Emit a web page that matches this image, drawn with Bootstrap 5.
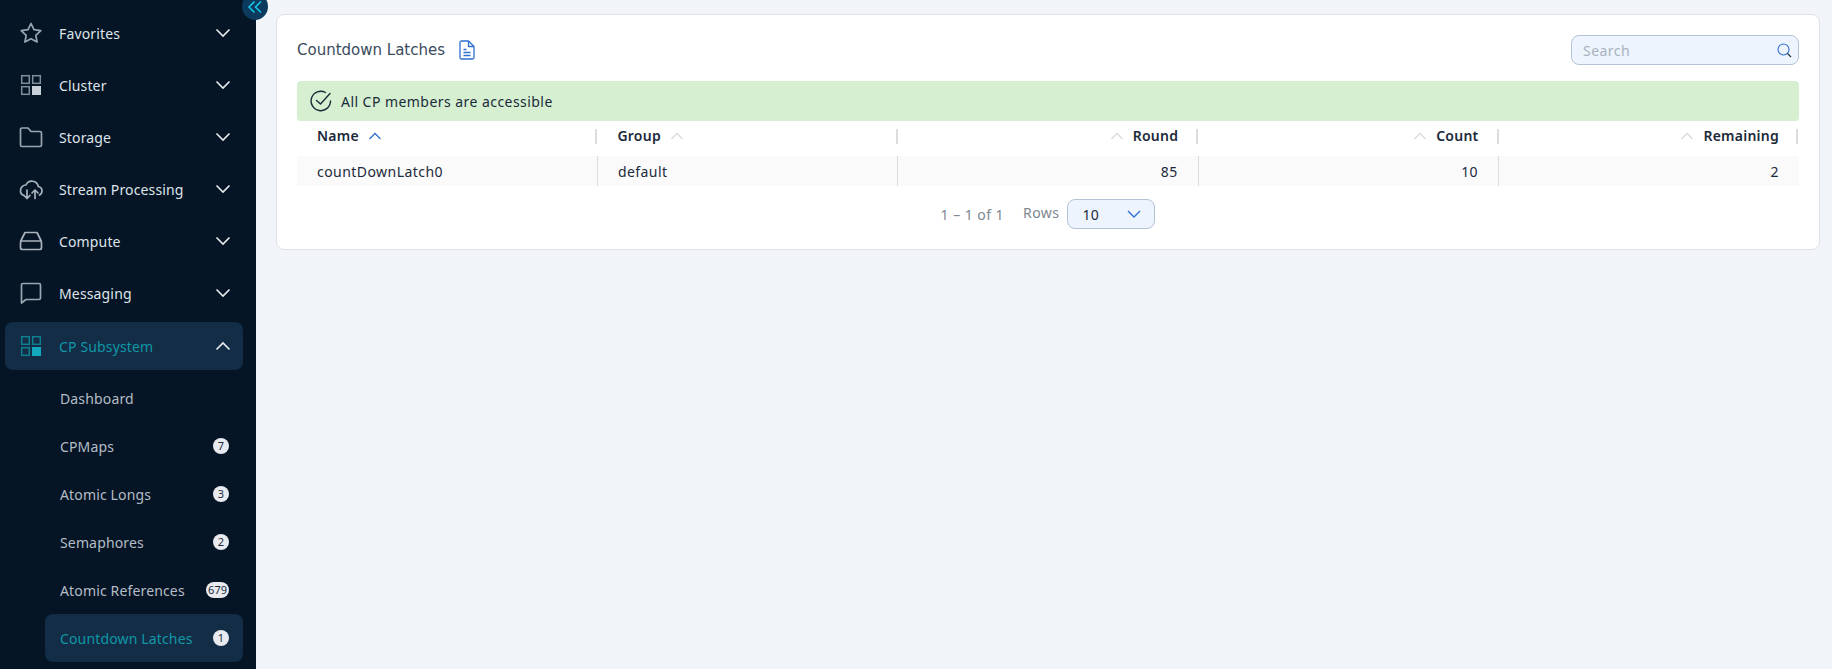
<!DOCTYPE html>
<html lang="en">
<head>
    <meta charset="UTF-8">
    <meta name="viewport" content="width=device-width, initial-scale=1.0">
    <title>Countdown Latches</title>
    <link href="https://cdn.jsdelivr.net/npm/bootstrap@5.3.0/dist/css/bootstrap.min.css" rel="stylesheet">
    <style>
        html, body { height: 100%; }
        body { background-color: #f1f4f9; font-family: "Noto Sans", sans-serif; font-size: 14px; color: #1b2a3a; overflow: hidden; }
        .app-shell { height: 669px; }
        .side-bar { width: 256px; flex: none; background-color: #051525; position: relative; padding-top: 7px; letter-spacing: .15px; }
        .collapse-btn { position: absolute; top: -7px; left: 242px; width: 26px; height: 27px; border-radius: 50%; background-color: #0b3a5c; z-index: 2; }
        .menu-row { height: 52px; padding: 0 24px 0 20px; color: #dfe4ea; }
        .menu-row.is-open { height: 48px; margin: 3px 13px 4px 5px; padding: 0 11px 0 15px; background-color: #142d46; border-radius: 8px; color: #0f97a8; }
        .menu-icon { width: 24px; height: 24px; flex: none; margin-right: 16px; margin-left: -1px; }
        .menu-chev { width: 16px; height: 16px; margin-left: auto; flex: none; margin-right: 1px; }
        .sub-row { height: 48px; margin-left: 45px; margin-right: 13px; padding: 0 14px 0 15px; color: #b5bdc6; }
        .sub-row.is-current { background-color: #142d46; border-radius: 8px; color: #0f97a8; }
        .count-pill { margin-left: auto; min-width: 16px; height: 16px; padding: 0 2px; border-radius: 8px; background-color: #e8eaf0; color: #1b2a3a; font-size: 11px; line-height: 16px; text-align: center; letter-spacing: 0; }
        .main-pane { padding: 14px 12px 0 20px; letter-spacing: .45px; }
        .panel-box { height: 236px; border: 1px solid #dfe2e7; border-radius: 8px; background-color: #fff; padding: 19px 20px 0; }
        .panel-head { height: 32px; margin-bottom: 15px; }
        .panel-title { font-family: "DejaVu Sans", sans-serif; font-size: 15px; font-weight: 400; letter-spacing: 0; color: #3a4b5d; margin: 0; }
        .doc-icon { width: 18px; height: 20px; margin-left: 13px; }
        .search-box { width: 228px; height: 30px; border: 1px solid #b4c2d6; border-radius: 8px; background-color: #edf4fd; padding: 0 6px 0 11px; }
        .search-box input { border: 0; background: transparent; outline: 0; padding: 0; width: 190px; font-size: 14px; color: #1b2a3a; letter-spacing: .45px; }
        .search-box input::placeholder { color: #a9b2bf; }
        .ok-bar { height: 40px; background-color: #d5efd0; border-radius: 4px; padding: 0 13px; margin-bottom: 8px; color: #1b2a3a; }
        .ok-bar svg { width: 22px; height: 22px; margin-right: 9px; }
        .latch-table { table-layout: fixed; width: 100%; margin: 0; }
        .latch-table th, .latch-table td { padding: 0; border: 0; font-size: 14px; color: #1b2a3a; }
        .latch-table th { height: 27px; vertical-align: top; font-weight: 600; letter-spacing: .25px; }
        .head-cell { height: 15px; line-height: 15px; border-right: 2px solid #dadcdf; padding: 0 18px 2px 20px; gap: 9px; }
        .latch-table th:last-child .head-cell { margin-right: 1px; padding-right: 17px; }
        .latch-table td { height: 30px; background-color: #fafafa; border-right: 1px solid #dadcdf; padding: 0 20px; vertical-align: middle; }
        .latch-table td:last-child { border-right: 0; }
        .sort-mark { width: 14px; height: 8px; flex: none; }
        .pager-row { margin-top: 13px; height: 30px; color: #7d8791; }
        .rows-label { margin: 0 8px 0 19px; position: relative; top: -2px; }
        .rows-pick { width: 88px; height: 30px; border: 1px solid #b4c2d6; border-radius: 8px; background-color: #edf4fd; padding: 0 13px 0 14px; color: #1b2a3a; }
    </style>
</head>
<body>
    <div class="app-shell d-flex">
        <!-- sidebar -->
        <nav class="side-bar">
            <div class="collapse-btn d-flex align-items-center justify-content-center">
                <svg width="16" height="14" viewBox="0 0 16 14" fill="none" stroke="#18c5ea" stroke-width="1.6"><path d="M7.5 1.5 2 7l5.5 5.5M14 1.5 8.500 7l5.500 5.500"/></svg>
            </div>

            <div class="menu-row d-flex align-items-center">
                <svg class="menu-icon" viewBox="0 0 24 24" fill="none" stroke="#9aa5b1" stroke-width="1.7" stroke-linejoin="round"><path d="m12 2.500 3 6.200 6.800.9-5 4.700 1.300 6.700-6.100-3.300L5.900 21l1.300-6.700-5-4.700 6.800-.9z"/></svg>
                <span>Favorites</span>
                <svg class="menu-chev" viewBox="0 0 16 16" fill="none" stroke="#e8ecf0" stroke-width="1.6"><path d="m1.500 4.500 6.500 6.500 6.500-6.500"/></svg>
            </div>
            <div class="menu-row d-flex align-items-center">
                <svg class="menu-icon" viewBox="0 0 24 24" fill="none" stroke="#808c99" stroke-width="1.500"><rect x="2.700" y="2.700" width="7.600" height="7.600"/><rect x="13.700" y="2.700" width="7.600" height="7.600"/><rect x="2.700" y="13.700" width="7.600" height="7.600"/><rect x="13" y="13" width="9" height="9" fill="#c8d0da" stroke="none"/></svg>
                <span>Cluster</span>
                <svg class="menu-chev" viewBox="0 0 16 16" fill="none" stroke="#e8ecf0" stroke-width="1.6"><path d="m1.500 4.500 6.500 6.500 6.500-6.500"/></svg>
            </div>
            <div class="menu-row d-flex align-items-center">
                <svg class="menu-icon" viewBox="0 0 24 24" fill="none" stroke="#9aa5b1" stroke-width="1.700" stroke-linejoin="round"><path d="M1.500 4.500a1.500 1.500 0 0 1 1.500-1.500h6l3 3.500h9a1.500 1.500 0 0 1 1.500 1.500v12a1.500 1.500 0 0 1-1.500 1.500H3a1.500 1.500 0 0 1-1.500-1.500z"/></svg>
                <span>Storage</span>
                <svg class="menu-chev" viewBox="0 0 16 16" fill="none" stroke="#e8ecf0" stroke-width="1.6"><path d="m1.500 4.500 6.500 6.500 6.500-6.500"/></svg>
            </div>
            <div class="menu-row d-flex align-items-center">
                <svg class="menu-icon" viewBox="0 0 24 24" fill="none" stroke="#aab3bd" stroke-width="1.700" stroke-linecap="round" stroke-linejoin="round"><path d="M5 18.500a5 5 0 0 1-3.500-5A5.500 5.500 0 0 1 7 8a6.500 6.500 0 0 1 12.300 1.500A4.600 4.600 0 0 1 23 14a4.500 4.500 0 0 1-2.500 4"/><path d="M8 13v8.500M5 18.500l3 3 3-3M16 21.500V13M13 16l3-3 3 3"/></svg>
                <span>Stream Processing</span>
                <svg class="menu-chev" viewBox="0 0 16 16" fill="none" stroke="#e8ecf0" stroke-width="1.6"><path d="m1.500 4.500 6.500 6.500 6.500-6.500"/></svg>
            </div>
            <div class="menu-row d-flex align-items-center">
                <svg class="menu-icon" viewBox="0 0 24 24" fill="none" stroke="#aab3bd" stroke-width="1.700" stroke-linejoin="round"><path d="M1.500 12.500 6 3.500h12l4.500 9"/><rect x="1.500" y="12" width="21" height="8.500" rx="2"/></svg>
                <span>Compute</span>
                <svg class="menu-chev" viewBox="0 0 16 16" fill="none" stroke="#e8ecf0" stroke-width="1.6"><path d="m1.500 4.500 6.500 6.500 6.500-6.500"/></svg>
            </div>
            <div class="menu-row d-flex align-items-center">
                <svg class="menu-icon" viewBox="0 0 24 24" fill="none" stroke="#9aa5b1" stroke-width="1.700" stroke-linejoin="round"><path d="M2.500 4a1.500 1.500 0 0 1 1.500-1.500h16A1.500 1.500 0 0 1 21.500 4v13a1.500 1.500 0 0 1-1.500 1.500H7L2.500 22z"/></svg>
                <span>Messaging</span>
                <svg class="menu-chev" viewBox="0 0 16 16" fill="none" stroke="#e8ecf0" stroke-width="1.6"><path d="m1.500 4.500 6.500 6.500 6.500-6.500"/></svg>
            </div>
            <div class="menu-row is-open d-flex align-items-center">
                <svg class="menu-icon" viewBox="0 0 24 24" fill="none" stroke="#0f7f90" stroke-width="1.500"><rect x="2.700" y="2.700" width="7.600" height="7.600"/><rect x="13.700" y="2.700" width="7.600" height="7.600"/><rect x="2.700" y="13.700" width="7.600" height="7.600"/><rect x="13" y="13" width="9" height="9" fill="#13a9bd" stroke="none"/></svg>
                <span>CP Subsystem</span>
                <svg class="menu-chev" viewBox="0 0 16 16" fill="none" stroke="#e8ecf0" stroke-width="1.6"><path d="m1.500 11.500 6.500-6.500 6.500 6.500"/></svg>
            </div>

            <div class="sub-row d-flex align-items-center"><span>Dashboard</span></div>
            <div class="sub-row d-flex align-items-center"><span>CPMaps</span><span class="count-pill">7</span></div>
            <div class="sub-row d-flex align-items-center"><span>Atomic Longs</span><span class="count-pill">3</span></div>
            <div class="sub-row d-flex align-items-center"><span>Semaphores</span><span class="count-pill">2</span></div>
            <div class="sub-row d-flex align-items-center"><span>Atomic References</span><span class="count-pill">679</span></div>
            <div class="sub-row is-current d-flex align-items-center"><span>Countdown Latches</span><span class="count-pill">1</span></div>
        </nav>

        <!-- main content -->
        <main class="main-pane flex-grow-1">
            <div class="panel-box">
                <div class="panel-head d-flex align-items-center">
                    <h1 class="panel-title">Countdown Latches</h1>
                    <svg class="doc-icon" viewBox="0 0 18 20" fill="none" stroke="#2f6fd0" stroke-width="1.300" stroke-linejoin="round"><path d="M3 1h7.500L16 6.500V17.500a1.500 1.500 0 0 1-1.500 1.500h-11A1.500 1.500 0 0 1 2 17.500v-15A1.500 1.500 0 0 1 3 1z"/><path d="M10.500 1v5.500H16M5.500 9.500h3M5.500 12.500h7M5.500 15.500h7"/></svg>
                    <div class="search-box ms-auto d-flex align-items-center justify-content-between">
                        <input type="text" placeholder="Search">
                        <svg width="15" height="15" viewBox="0 0 15 15" fill="none" stroke="#2f6fd0" stroke-width="1.100"><circle cx="6.500" cy="6.500" r="5.500"/><path d="m10.500 10.500 3.500 3.500" stroke="#1b2a3a"/></svg>
                    </div>
                </div>

                <div class="ok-bar d-flex align-items-center">
                    <svg viewBox="0 0 22 22" fill="none" stroke="#1b2a3a" stroke-width="1.400" stroke-linecap="round" stroke-linejoin="round"><path d="M20.500 11A9.700 9.700 0 1 1 15.500 2.500"/><path d="m6.500 10.500 4 3.500L20 3.500"/></svg>
                    <span>All CP members are accessible</span>
                </div>

                <table class="table latch-table">
                    <thead>
                        <tr>
                            <th><div class="head-cell d-flex align-items-center"><span>Name</span><svg class="sort-mark" viewBox="0 0 14 8" fill="none" stroke="#2f6fd0" stroke-width="1.300"><path d="m1.500 7 5.500-5.500L12.500 7"/></svg></div></th>
                            <th><div class="head-cell d-flex align-items-center"><span>Group</span><svg class="sort-mark" viewBox="0 0 14 8" fill="none" stroke="#d8dbdf" stroke-width="1.300"><path d="m1.500 7 5.500-5.500L12.500 7"/></svg></div></th>
                            <th><div class="head-cell d-flex align-items-center justify-content-end"><svg class="sort-mark" viewBox="0 0 14 8" fill="none" stroke="#d8dbdf" stroke-width="1.300"><path d="m1.500 7 5.500-5.500L12.500 7"/></svg><span>Round</span></div></th>
                            <th><div class="head-cell d-flex align-items-center justify-content-end"><svg class="sort-mark" viewBox="0 0 14 8" fill="none" stroke="#d8dbdf" stroke-width="1.300"><path d="m1.500 7 5.500-5.500L12.500 7"/></svg><span>Count</span></div></th>
                            <th><div class="head-cell d-flex align-items-center justify-content-end"><svg class="sort-mark" viewBox="0 0 14 8" fill="none" stroke="#d8dbdf" stroke-width="1.300"><path d="m1.500 7 5.500-5.500L12.500 7"/></svg><span>Remaining</span></div></th>
                        </tr>
                    </thead>
                    <tbody>
                        <tr>
                            <td>countDownLatch0</td>
                            <td>default</td>
                            <td class="text-end">85</td>
                            <td class="text-end">10</td>
                            <td class="text-end">2</td>
                        </tr>
                    </tbody>
                </table>

                <div class="pager-row d-flex align-items-center justify-content-center">
                    <span>1 – 1 of 1</span>
                    <span class="rows-label">Rows</span>
                    <div class="rows-pick d-flex align-items-center justify-content-between">
                        <span>10</span>
                        <svg width="14" height="8" viewBox="0 0 14 8" fill="none" stroke="#2f6fd0" stroke-width="1.400"><path d="m1 1 6 6 6-6"/></svg>
                    </div>
                </div>
            </div>
        </main>
    </div>
    <script src="https://cdn.jsdelivr.net/npm/bootstrap@5.3.0/dist/js/bootstrap.bundle.min.js"></script>
</body>
</html>
